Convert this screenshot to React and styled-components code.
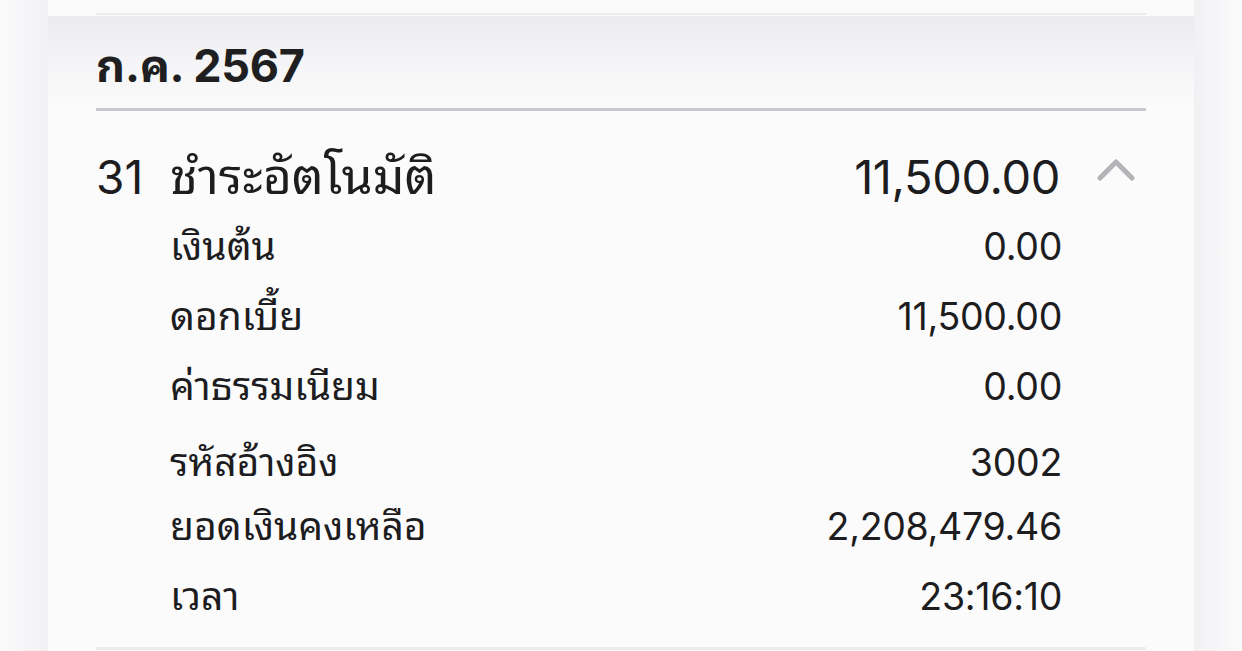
import React from "react"
import styled, { createGlobalStyle } from "styled-components"

const GlobalStyle = createGlobalStyle`
  html, body {
    margin: 0;
    padding: 0;
  }
  body {
    width: 1242px;
    height: 651px;
    overflow: hidden;
    background: linear-gradient(
      to right,
      #fbfbfc 0px,
      #f1f1f4 48px,
      #f1f1f4 1194px,
      #fbfbfc 1242px
    );
    font-family: Inter, "Noto Sans Thai Looped", "Noto Sans Thai", "Noto Sans", sans-serif;
    color: #1d1d1f;
  }
`

const details = [
  { label: "เงินต้น", value: "0.00" },
  { label: "ดอกเบี้ย", value: "11,500.00" },
  { label: "ค่าธรรมเนียม", value: "0.00" },
  { label: "รหัสอ้างอิง", value: "3002", shift: 6 },
  { label: "ยอดเงินคงเหลือ", value: "2,208,479.46", shift: -6 },
  { label: "เวลา", value: "23:16:10", last: true },
]

const App = () => {
  return (
    <>
      <GlobalStyle />
      <Card>
        <PrevItem />
        <MonthHeader>
          <MonthInner>
            <MonthTitle>ก.ค. 2567</MonthTitle>
          </MonthInner>
        </MonthHeader>
        <Body>
          <MainRow>
            <Day>31</Day>
            <Title>ชำระอัตโนมัติ</Title>
            <Amount>11,500.00</Amount>
            <Toggle>
              <svg width="40" height="24" viewBox="0 0 40 24">
                <polyline
                  points="3,20 19,4 35,20"
                  fill="none"
                  stroke="#b4b4b8"
                  strokeWidth="5"
                  strokeLinecap="round"
                  strokeLinejoin="round"
                />
              </svg>
            </Toggle>
          </MainRow>
          {details.map((d) => (
            <DetailRow key={d.label} $shift={d.shift || 0} $last={d.last}>
              <Label>{d.label}</Label>
              <Value>{d.value}</Value>
              <Spacer />
            </DetailRow>
          ))}
        </Body>
      </Card>
    </>
  )
}

const Card = styled.div`
  margin: 0 48px;
  width: 1146px;
  height: 651px;
  background: #fbfbfc;
  overflow: hidden;
`

const PrevItem = styled.div`
  margin: 0 48px;
  height: 13px;
  border-bottom: 2px solid #ececef;
`

const MonthHeader = styled.div`
  margin-top: 1px;
  background: linear-gradient(to bottom, #ebebed 0%, #f4f4f6 45%, #fbfbfc 100%);
`

const MonthInner = styled.div`
  margin: 0 48px;
  height: 95px;
  padding-top: 6px;
  box-sizing: border-box;
  border-bottom: 3px solid #c9c8d0;
  display: flex;
  align-items: center;
`

const MonthTitle = styled.h2`
  margin: 0;
  font-size: 45px;
  font-weight: 700;
  letter-spacing: -0.3px;
  color: #1f1f21;
  line-height: 1;
`

const Body = styled.div`
  margin: 0 48px;
  padding-top: 30px;
`

const MainRow = styled.div`
  display: flex;
  align-items: baseline;
  height: 70px;
  line-height: 70px;
`

const Day = styled.span`
  width: 74px;
  font-size: 46px;
  font-weight: 400;
`

const Title = styled.span`
  flex: 1;
  font-size: 50px;
`

const Amount = styled.span`
  font-size: 47px;
  letter-spacing: -0.4px;
`

const Toggle = styled.span`
  width: 86px;
  height: 70px;
  display: flex;
  justify-content: flex-end;
  align-self: flex-start;
  padding-top: 17px;
  padding-right: 9px;
  box-sizing: border-box;
  line-height: 1;
`

const DetailRow = styled.div`
  display: flex;
  align-items: baseline;
  height: 70px;
  line-height: 70px;
  padding-left: 74px;
  margin-top: ${(p) => p.$shift}px;
  padding-bottom: ${(p) => (p.$last ? "16px" : "0")};
  border-bottom: ${(p) => (p.$last ? "3px solid #ededf0" : "none")};
`

const Label = styled.span`
  flex: 1;
  font-size: 39px;
`

const Value = styled.span`
  font-size: 37.5px;
  letter-spacing: -0.3px;
`

const Spacer = styled.span`
  width: 84px;
`

export default App
